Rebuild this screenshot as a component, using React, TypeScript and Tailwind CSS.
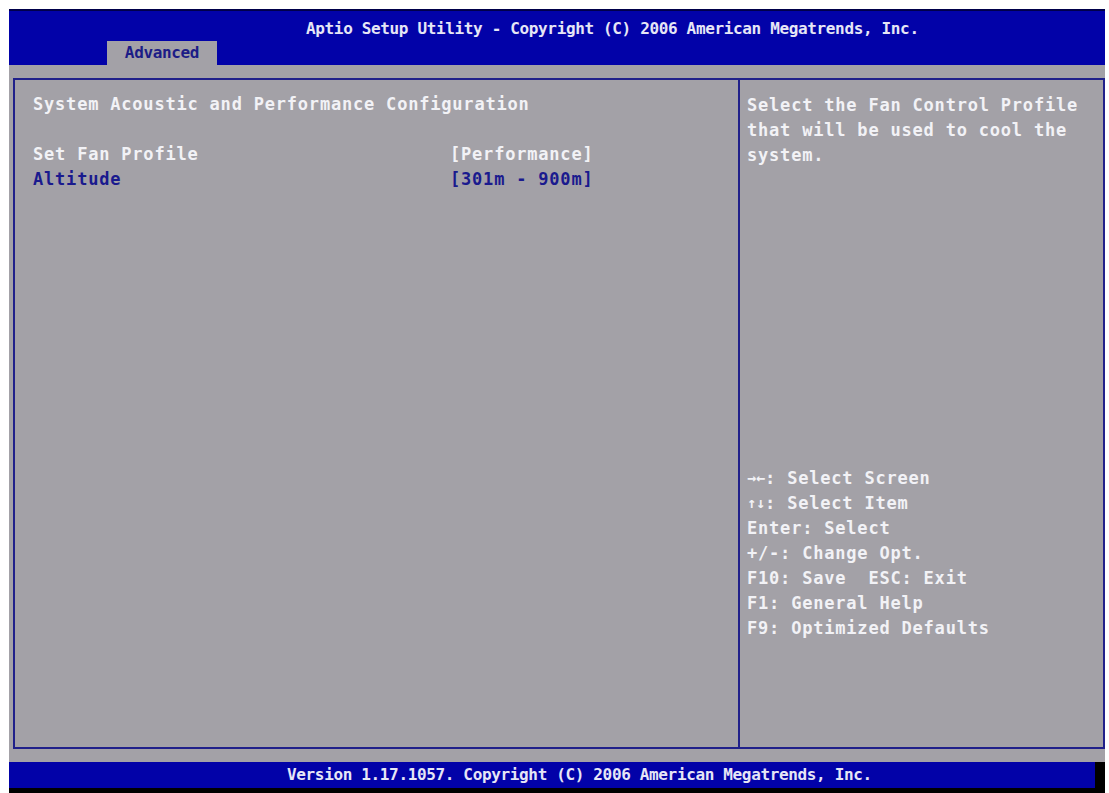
const MONO = "font-['DejaVu_Sans_Mono','Liberation_Mono',monospace] font-bold";

const HELP: [string, string][] = [
  ['→←', ': Select Screen'],
  ['↑↓', ': Select Item'],
  ['', 'Enter: Select'],
  ['', '+/-: Change Opt.'],
  ['', 'F10: Save  ESC: Exit'],
  ['', 'F1: General Help'],
  ['', 'F9: Optimized Defaults'],
];

function SettingRow({ label, value, active }: { label: string; value: string; active?: boolean }) {
  const color = active ? 'text-[#1a1a8e]' : 'text-[#f2f2f6]';
  return (
    <div className={`flex leading-[25px] ${color}`}>
      <span className="w-[417px] shrink-0 whitespace-pre">{label}</span>
      <span className="whitespace-pre">{value}</span>
    </div>
  );
}

export default function App() {
  return (
    <div className={`w-[1109px] h-[793px] bg-white pl-[9px] pt-[9px] pr-[4px] overflow-hidden ${MONO}`}>
      <div className="flex flex-col h-full bg-[#a3a1a7]">
        {/* title bar */}
        <div className="h-[56px] bg-[#0202a8] border-t-2 border-[#00004a] flex flex-col">
          <div className="pl-[297px] pt-[5px] leading-[25px] text-[16px] tracking-[-0.35px] text-[#e6e6f6] whitespace-pre">
            Aptio Setup Utility - Copyright (C) 2006 American Megatrends, Inc.
          </div>
          <div className="ml-[98px] w-[110px] h-[24px] bg-[#a3a1a7] flex items-center justify-center text-[16px] tracking-[-0.35px] text-[#1c1c86]">
            Advanced
          </div>
        </div>

        <div className="h-[13px]" />

        {/* main panel */}
        <div className="ml-[4px] h-[671px] border-2 border-[#20208a] flex">
          <div className="w-[725px] shrink-0 border-r-2 border-[#20208a] pl-[18px] pt-[12px] text-[17px] tracking-[0.8px]">
            <div className="leading-[25px] text-[#f2f2f6] whitespace-pre">
              System Acoustic and Performance Configuration
            </div>
            <div className="h-[25px]" />
            <SettingRow label="Set Fan Profile" value="[Performance]" />
            <SettingRow label="Altitude" value="[301m - 900m]" active />
          </div>

          <div className="flex-1 pl-[7px] pt-[13px] text-[17px] tracking-[0.8px] text-[#f2f2f6] leading-[25px] whitespace-pre">
            <div>Select the Fan Control Profile</div>
            <div>that will be used to cool the</div>
            <div>system.</div>
            <div className="mt-[298px]">
              {HELP.map(([keys, text]) => (
                <div key={text} className="h-[25px] flex items-center">
                  {keys && <span className="text-[15px] tracking-[0px] leading-none">{keys}</span>}
                  <span>{text}</span>
                </div>
              ))}
            </div>
          </div>
        </div>

        <div className="h-[13px]" />

        {/* footer */}
        <div className="flex-1 bg-black flex flex-col">
          <div className="h-[26px] w-[1086px] bg-[#0202a8] pl-[278px] flex items-center text-[16px] tracking-[-0.35px] text-[#e6e6f6] whitespace-pre">
            Version 1.17.1057. Copyright (C) 2006 American Megatrends, Inc.
          </div>
        </div>
      </div>
    </div>
  );
}
